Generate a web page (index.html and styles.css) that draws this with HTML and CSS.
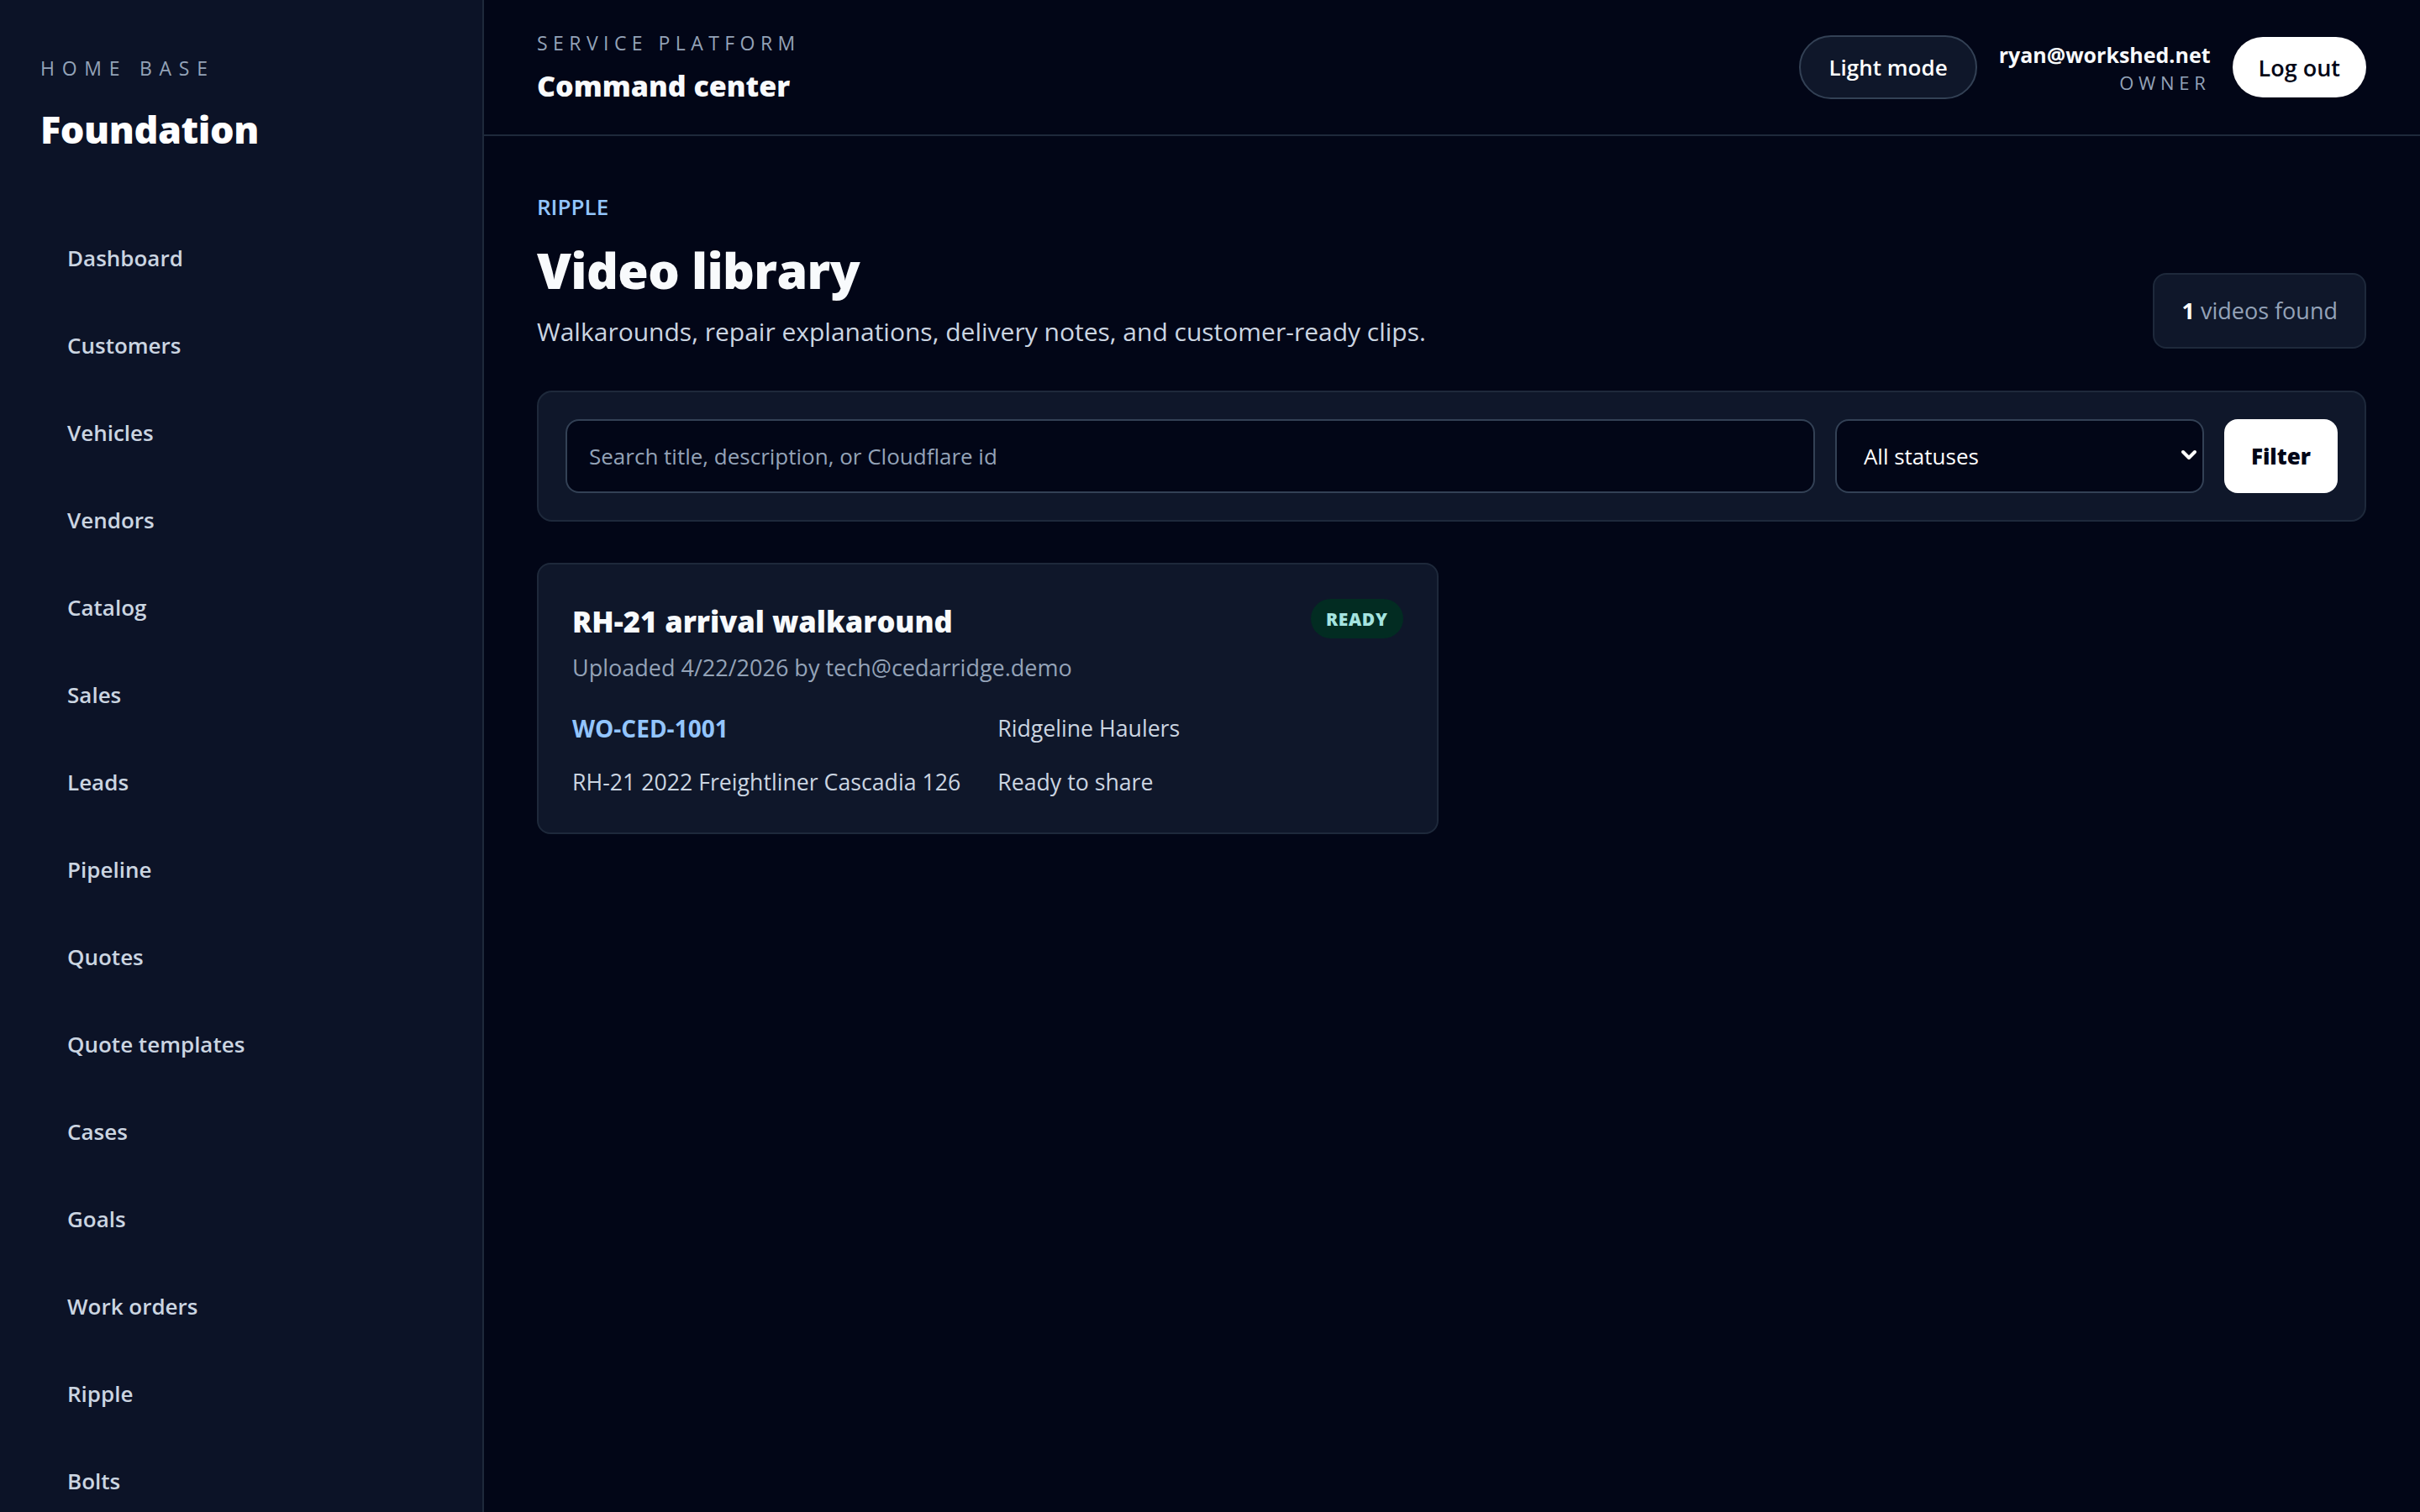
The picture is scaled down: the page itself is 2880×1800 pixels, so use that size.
FILE: index.html
```html
<!DOCTYPE html>
<html lang="en">
<head>
    <meta charset="UTF-8">
    <meta name="viewport" content="width=device-width, initial-scale=1.0">
    <title>Video library - Foundation</title>
    <link rel="stylesheet" href="styles.css">
</head>
<body>
    <aside class="sidebar">
        <div class="brand-eyebrow">Home base</div>
        <div class="brand-name">Foundation</div>

        <nav class="nav">
            <a href="#">Dashboard</a>
            <a href="#">Customers</a>
            <a href="#">Vehicles</a>
            <a href="#">Vendors</a>
            <a href="#">Catalog</a>
            <a href="#">Sales</a>
            <a href="#">Leads</a>
            <a href="#">Pipeline</a>
            <a href="#">Quotes</a>
            <a href="#">Quote templates</a>
            <a href="#">Cases</a>
            <a href="#">Goals</a>
            <a href="#">Work orders</a>
            <a href="#">Ripple</a>
            <a href="#">Bolts</a>
        </nav>
    </aside>

    <div class="main">
        <header class="topbar">
            <div class="topbar-title">
                <div class="eyebrow">Service platform</div>
                <div class="title">Command center</div>
            </div>
            <div class="topbar-actions">
                <button class="btn-ghost">Light mode</button>
                <div class="user">
                    <div class="user-email">ryan@workshed.net</div>
                    <div class="user-role">Owner</div>
                </div>
                <button class="btn-light">Log out</button>
            </div>
        </header>

        <main class="content">
            <div class="page-head">
                <div>
                    <div class="section-label">Ripple</div>
                    <h1>Video library</h1>
                    <p class="lead">Walkarounds, repair explanations, delivery notes, and customer-ready clips.</p>
                </div>
                <div class="count"><strong>1</strong> videos found</div>
            </div>

            <form class="filters" onsubmit="return false;">
                <input type="text" placeholder="Search title, description, or Cloudflare id">
                <div class="select-wrap">
                    <select>
                        <option>All statuses</option>
                        <option>Ready</option>
                        <option>Processing</option>
                        <option>Failed</option>
                    </select>
                    <svg class="chevron" width="20" height="14" viewBox="0 0 20 14">
                        <path d="M3 3l7 7 7-7" fill="none" stroke="#fff" stroke-width="4" stroke-linecap="round" stroke-linejoin="round"/>
                    </svg>
                </div>
                <button class="btn-light btn-square" type="submit">Filter</button>
            </form>

            <div class="video-grid">
                <div class="video-card">
                    <div class="video-card-head">
                        <h2>RH-21 arrival walkaround</h2>
                        <span class="badge ready">Ready</span>
                    </div>
                    <div class="video-meta">Uploaded 4/22/2026 by tech@cedarridge.demo</div>
                    <div class="video-details">
                        <a href="#" class="wo-link">WO-CED-1001</a>
                        <span>Ridgeline Haulers</span>
                        <span>RH-21 2022 Freightliner Cascadia 126</span>
                        <span>Ready to share</span>
                    </div>
                </div>
            </div>
        </main>
    </div>
</body>
</html>
```

FILE: styles.css
```css
body {
    margin: 0;
    display: flex;
    min-height: 100vh;
    background-color: #020617;
    color: #f8fafc;
    font-family: "Open Sans", "Noto Sans", sans-serif;
    font-size: 26px;
}
a {
    color: inherit;
    text-decoration: none;
}
button, input, select {
    font-family: inherit;
    font-size: 26px;
}

/* sidebar */
.sidebar {
    width: 576px;
    flex-shrink: 0;
    height: 100vh;
    overflow: hidden;
    box-sizing: border-box;
    padding: 66px 48px 0;
    background-color: #0c1327;
    border-right: 2px solid #1e293b;
}
.brand-eyebrow {
    font-size: 23px;
    line-height: 30px;
    letter-spacing: 0.38em;
    text-transform: uppercase;
    color: #94a3b8;
}
.brand-name {
    margin-top: 28px;
    font-size: 45px;
    line-height: 60px;
    font-weight: 800;
    color: #fff;
    letter-spacing: -0.01em;
}
.nav {
    margin-top: 71px;
}
.nav a {
    display: block;
    padding: 32px;
    line-height: 40px;
    font-weight: 600;
    color: #cbd5e1;
}

/* top bar */
.main {
    flex: 1;
    min-width: 0;
}
.topbar {
    height: 160px;
    display: flex;
    align-items: center;
    justify-content: space-between;
    padding: 0 64px 0 63px;
    border-bottom: 2px solid #1e293b;
}
.topbar-title {
    margin-top: -3px;
}
.eyebrow {
    font-size: 23px;
    line-height: 30px;
    letter-spacing: 0.28em;
    text-transform: uppercase;
    color: #94a3b8;
}
.title {
    margin-top: 16px;
    font-size: 34px;
    line-height: 40px;
    font-weight: 800;
}
.topbar-actions {
    display: flex;
    align-items: center;
    gap: 26px;
}
.btn-ghost {
    height: 76px;
    padding: 0 33px;
    border: 2px solid #334155;
    border-radius: 40px;
    background-color: #0f172a;
    color: #fff;
    font-weight: 600;
    cursor: pointer;
}
.btn-light {
    height: 72px;
    padding: 0 31px;
    border: none;
    border-radius: 40px;
    background-color: #fff;
    color: #020617;
    font-size: 27px;
    font-weight: 600;
    cursor: pointer;
}
.user {
    text-align: right;
}
.user-email {
    font-size: 25px;
    font-weight: 700;
    line-height: 36px;
}
.user-role {
    font-size: 22px;
    line-height: 30px;
    letter-spacing: 0.26em;
    text-transform: uppercase;
    color: #94a3b8;
}

/* page */
.content {
    padding: 69px 64px 64px 63px;
}
.page-head {
    display: flex;
    align-items: flex-end;
    justify-content: space-between;
}
.section-label {
    font-size: 26px;
    line-height: 30px;
    font-weight: 600;
    text-transform: uppercase;
    color: #93c5fd;
}
h1 {
    margin: 25px 0 0;
    font-size: 59px;
    line-height: 70px;
    font-weight: 800;
    letter-spacing: -0.01em;
}
.lead {
    margin: 19px 0 0;
    font-size: 30px;
    line-height: 40px;
    color: #cbd5e1;
}
.count {
    padding: 23px 32px;
    font-size: 27px;
    line-height: 40px;
    border: 2px solid #1e293b;
    border-radius: 16px;
    background-color: #0f172a;
    color: #94a3b8;
}
.count strong {
    color: #fff;
}

.filters {
    margin-top: 50px;
    display: grid;
    grid-template-columns: 1fr 439px auto;
    gap: 24px;
    padding: 32px;
    border: 2px solid #1e293b;
    border-radius: 18px;
    background-color: #0f172a;
}
.filters input,
.filters select {
    width: 100%;
    height: 88px;
    box-sizing: border-box;
    padding: 0 26px;
    border: 2px solid #334155;
    border-radius: 16px;
    background-color: #020617;
    color: #fff;
    outline: none;
}
.filters input::placeholder {
    color: #94a3b8;
}
.filters select {
    appearance: none;
    padding-left: 32px;
}
.select-wrap {
    position: relative;
}
.chevron {
    position: absolute;
    right: 8px;
    top: 36px;
    pointer-events: none;
}
.btn-square {
    height: 88px;
    padding: 0 32px;
    border-radius: 16px;
    font-size: 26px;
    font-weight: 800;
}

/* video cards */
.video-grid {
    margin-top: 49px;
    display: grid;
    grid-template-columns: 1fr 1fr;
    gap: 32px;
}
.video-card {
    padding: 40px;
    border: 2px solid #1e293b;
    border-radius: 16px;
    background-color: #0f172a;
}
.video-card-head {
    display: flex;
    align-items: flex-start;
    justify-content: space-between;
}
.video-card h2 {
    margin: 0;
    font-size: 34.5px;
    line-height: 56px;
    font-weight: 800;
}
.badge {
    margin-top: 1px;
    height: 47px;
    padding: 0 18px;
    display: flex;
    align-items: center;
    border-radius: 24px;
    font-size: 21px;
    font-weight: 800;
    letter-spacing: 0.03em;
    text-transform: uppercase;
}
.badge.ready {
    background-color: #022c22;
    color: #a5e4e0;
}
.video-meta {
    margin-top: 7px;
    font-size: 27px;
    line-height: 40px;
    color: #94a3b8;
}
.video-details {
    margin-top: 32px;
    display: grid;
    grid-template-columns: 1fr 1fr;
    column-gap: 24px;
    row-gap: 24px;
    font-size: 26.7px;
    line-height: 40px;
    color: #cbd5e1;
}
.wo-link {
    font-size: 28px;
    font-weight: 700;
    color: #93c5fd;
}
```
